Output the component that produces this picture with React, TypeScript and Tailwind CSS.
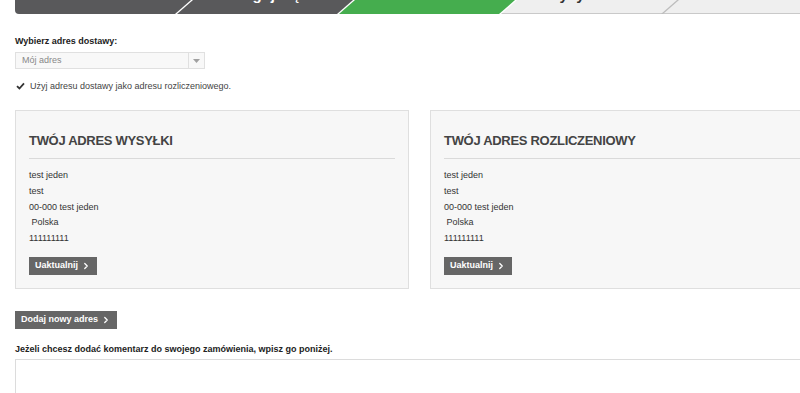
import { ChevronRight } from 'lucide-react';

const steps = [
  {
    label: '1. Podsumowanie',
    className: 'bg-[#59595b] text-white rounded-bl-[4px] pl-[10px] [clip-path:polygon(0_0,100%_0,calc(100%-16px)_100%,0_100%)]',
  },
  {
    label: '2. Zaloguj się',
    className: 'bg-[#59595b] text-white pl-[28px] [clip-path:polygon(16px_0,100%_0,calc(100%-16px)_100%,0_100%)]',
  },
  {
    label: '3. Adres',
    className: 'bg-[#45ad4e] text-white pl-[28px] [clip-path:polygon(16px_0,100%_0,calc(100%-16px)_100%,0_100%)]',
  },
  {
    label: '4. Wysyłka',
    className:
      'bg-[linear-gradient(#efefef_0,#efefef_13px,#c9c9c9_13px)] text-[#333] pl-[28px] [clip-path:polygon(16px_0,100%_0,calc(100%-16px)_100%,0_100%)]',
  },
  {
    label: '5. Płatność',
    className:
      'bg-[linear-gradient(#efefef_0,#efefef_13px,#c9c9c9_13px)] text-[#333] pl-[28px] [clip-path:polygon(16px_0,100%_0,calc(100%-16px)_100%,0_100%)]',
  },
];

const address = ['test jeden', 'test', '00-000 test jeden', '\u00a0Polska', '111111111'];

function GrayButton({ label }: { label: string }) {
  return (
    <button className="flex h-[18px] items-center gap-[3px] bg-[#666666] px-[6px] text-[9px] font-bold text-white">
      {label}
      <ChevronRight className="h-[10px] w-[10px]" strokeWidth={3} />
    </button>
  );
}

function AddressCard({ title }: { title: string }) {
  return (
    <div className="w-[394px] border border-[#dfdfdf] bg-[#f7f7f7] px-[13px] pt-[22px] pb-[13px]">
      <h2 className="border-b border-[#dadada] pb-[9px] text-[13px] leading-[16px] font-bold tracking-[-0.3px] text-[#444]">
        {title}
      </h2>
      <div className="mt-[9px] text-[9px] leading-[15.8px] text-[#333]">
        {address.map((line, i) => (
          <div key={i}>{line}</div>
        ))}
      </div>
      <div className="mt-[10px]">
        <GrayButton label="Uaktualnij" />
      </div>
    </div>
  );
}

export default function App() {
  return (
    <div className="h-[393px] w-[800px] overflow-hidden bg-white font-['Liberation_Sans',Arial,sans-serif]">
      {/* kroki zamówienia, przycięte od góry */}
      <div className="ml-[15px] flex h-[14px] w-[880px] overflow-hidden bg-[linear-gradient(90deg,#fff_0,#fff_585px,#bdbdbd_585px)]">
        {steps.map((step, i) => (
          <div
            key={step.label}
            className={`flex h-[14px] w-[176px] shrink-0 items-end overflow-hidden ${i > 0 ? '-ml-[14px]' : ''} ${step.className}`}
          >
            <span className="mb-[12px] text-[15px] leading-[15px] font-bold whitespace-nowrap">{step.label}</span>
          </div>
        ))}
      </div>

      <div className="ml-[15px] w-[809px]">
        <div className="mt-[21px] text-[9px] leading-[12px] font-bold text-[#222]">Wybierz adres dostawy:</div>

        <div className="mt-[5px] flex h-[17px] w-[190px] items-center border border-[#e0e0e0] bg-[#f8f8f8]">
          <span className="flex-1 pl-[6px] text-[9px] text-[#888]">Mój adres</span>
          <span className="flex h-full w-[16px] items-center justify-center border-l border-[#e0e0e0]">
            <svg width="7" height="4" viewBox="0 0 7 4">
              <path d="M0 0h7L3.5 4z" fill="#a0a0a0" />
            </svg>
          </span>
        </div>

        <label className="mt-[11px] flex items-center gap-[5px] text-[9px] leading-[12px] text-[#444]">
          <svg width="9" height="8" viewBox="0 0 9 8" className="ml-[1px]">
            <path d="M1 4.2 3.4 6.5 8 1.3" fill="none" stroke="#333" strokeWidth="1.8" />
          </svg>
          Użyj adresu dostawy jako adresu rozliczeniowego.
        </label>

        <div className="mt-[18px] flex gap-[21px]">
          <AddressCard title="TWÓJ ADRES WYSYŁKI" />
          <AddressCard title="TWÓJ ADRES ROZLICZENIOWY" />
        </div>

        <div className="mt-[22px]">
          <GrayButton label="Dodaj nowy adres" />
        </div>

        <div className="mt-[14px] text-[9px] leading-[12px] font-bold text-[#222]">
          Jeżeli chcesz dodać komentarz do swojego zamówienia, wpisz go poniżej.
        </div>

        <textarea className="mt-[4px] block h-[60px] w-full resize-none border border-[#dcdcdc] bg-white" />
      </div>
    </div>
  );
}
